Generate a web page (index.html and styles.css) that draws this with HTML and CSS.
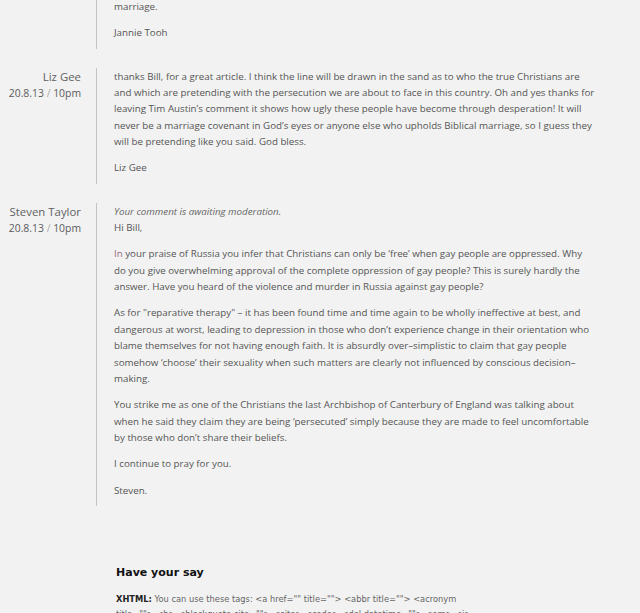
FILE: index.html
```html
<!DOCTYPE html>
<html lang="en">
<head>
<meta charset="utf-8">
<title>Comments</title>
<link rel="stylesheet" href="styles.css">
</head>
<body>
<div class="page">
  <ol class="comments">
    <li class="comment first">
      <div class="meta"></div>
      <div class="body">
        <p>marriage.</p>
        <p>Jannie Tooh</p>
      </div>
    </li>
    <li class="comment">
      <div class="meta">
        <div class="author">Liz Gee</div>
        <div class="date">20.8.13 <span class="sep">/</span> 10pm</div>
      </div>
      <div class="body">
        <p>thanks Bill, for a great article. I think the line will be drawn in the sand as to who the true Christians are and which are pretending with the persecution we are about to face in this country. Oh and yes thanks for leaving Tim Austin’s comment it shows how ugly these people have become through desperation! It will never be a marriage covenant in God’s eyes or anyone else who upholds Biblical marriage, so I guess they will be pretending like you said. God bless.</p>
        <p>Liz Gee</p>
      </div>
    </li>
    <li class="comment">
      <div class="meta">
        <div class="author">Steven Taylor</div>
        <div class="date">20.8.13 <span class="sep">/</span> 10pm</div>
      </div>
      <div class="body">
        <em class="moderation">Your comment is awaiting moderation.</em>
        <p>Hi Bill,</p>
        <p><span class="tint">In</span> your praise of Russia you infer that Christians can only be ‘free’ when gay people are oppressed. Why do you give overwhelming approval of the complete oppression of gay people? This is surely hardly the answer. Have you heard of the violence and murder in Russia against gay people?</p>
        <p>As for "reparative therapy" – it has been found time and time again to be wholly ineffective at best, and dangerous at worst, leading to depression in those who don’t experience change in their orientation who blame themselves for not having enough faith. It is absurdly over–simplistic to claim that gay people somehow ‘choose’ their sexuality when such matters are clearly not influenced by conscious decision–making.</p>
        <p>You strike me as one of the Christians the last Archbishop of Canterbury of England was talking about when he said they claim they are being ‘persecuted’ simply because they are made to feel uncomfortable by those who don’t share their beliefs.</p>
        <p>I continue to pray for you.</p>
        <p>Steven.</p>
      </div>
    </li>
  </ol>
  <section class="respond">
    <h3>Have your say</h3>
    <p class="tags"><strong>XHTML:</strong> You can use these tags: &lt;a href="" title=""&gt; &lt;abbr title=""&gt; &lt;acronym title=""&gt; &lt;b&gt; &lt;blockquote cite=""&gt; &lt;cite&gt; &lt;code&gt; &lt;del datetime=""&gt; &lt;em&gt; &lt;i&gt; &lt;q cite=""&gt; &lt;strike&gt; &lt;strong&gt;</p>
  </section>
</div>
</body>
</html>
```
FILE: styles.css
```css
html, body {
  margin: 0;
  padding: 0;
  background: #f2f2f2;
}
body {
  font-family: "Open Sans", "DejaVu Sans", sans-serif;
  color: #555;
}
.page {
  width: 596px;
}
.comments {
  list-style: none;
  margin: -2px 0 0;
  padding: 0;
}
.comment {
  display: flex;
  gap: 15px;
  margin-bottom: 19px;
}
.meta {
  width: 81px;
  flex: none;
  text-align: right;
  padding-top: 1px;
}
.author {
  font-size: 11.4px;
  line-height: 16.4px;
  color: #616161;
}
.date {
  font-size: 10.4px;
  line-height: 16.4px;
  color: #5c5c5c;
}
.sep {
  color: #aaa;
}
.body {
  flex: 1;
  border-left: 1px solid #c4c4c4;
  padding: 1px 0 7px 17px;
  font-size: 9.75px;
  line-height: 16.4px;
}
.body p {
  margin: 0 0 9.8px;
}
.body p:last-child {
  margin-bottom: 0;
}
.moderation {
  display: block;
  font-style: italic;
  color: #666;
}
.tint {
  color: #9a6a7e;
}
.respond {
  width: 360px;
  margin: 60px 0 0 116px;
}
.respond h3 {
  margin: 0 0 12px;
  font-family: "DejaVu Sans", sans-serif;
  font-weight: bold;
  font-size: 11px;
  line-height: 14px;
  color: #111;
}
.tags {
  margin: 0;
  font-family: "DejaVu Sans", sans-serif;
  font-size: 8.3px;
  line-height: 15px;
  color: #666;
}
.tags strong {
  color: #222;
}
```
